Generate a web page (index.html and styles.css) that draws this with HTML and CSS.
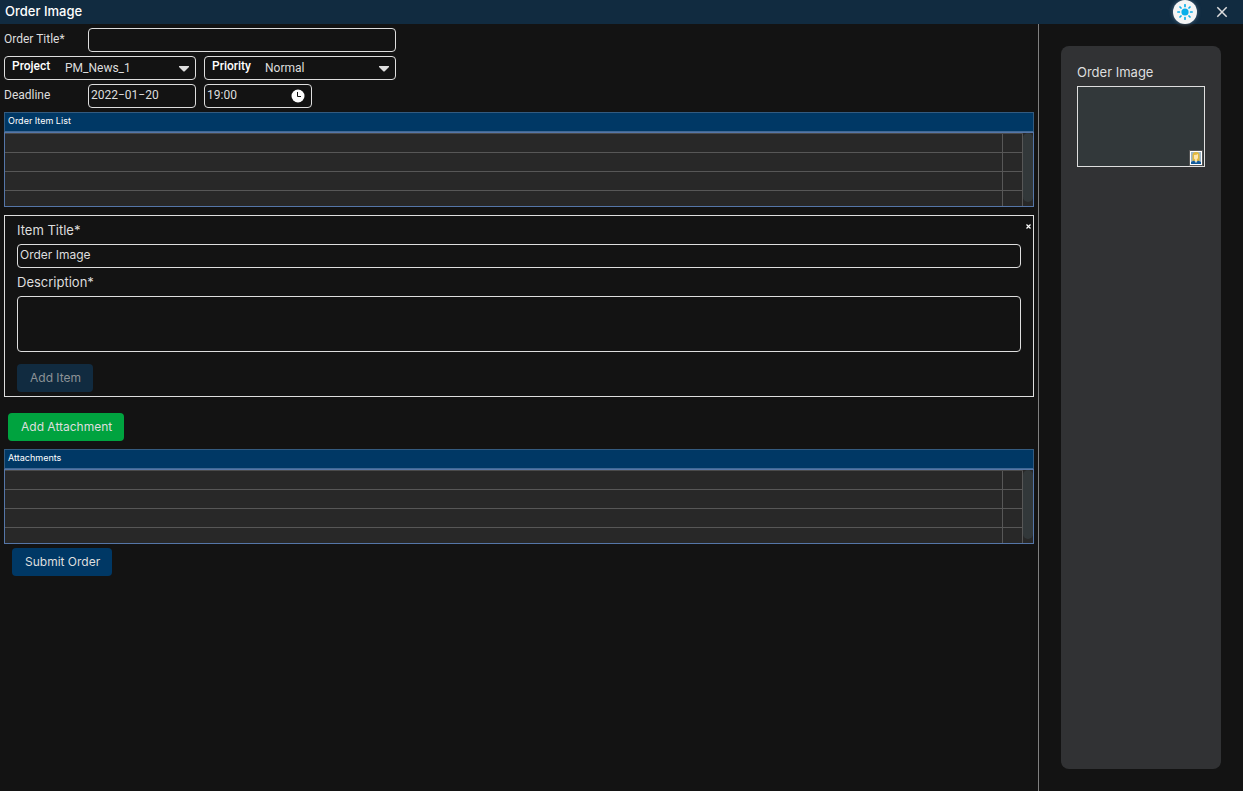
FILE: index.html
```html
<!DOCTYPE html>
<html lang="en">
<head>
<meta charset="utf-8">
<title>Order Image</title>
<link rel="stylesheet" href="styles.css">
</head>
<body>
<header class="topbar">
  <h1 class="topbar-title">Order Image</h1>
  <button class="theme-btn" type="button" aria-label="Switch theme">
    <svg width="16" height="16" viewBox="0 0 16 16"><circle cx="8" cy="8" r="3.6" fill="#08aeea"/><path d="M8 .8v1.600M8 13.600v1.600M.8 8h1.600M13.600 8h1.600M3 3l1 1M12 12l1 1M3 13l1-1M12 4l1-1" stroke="#08aeea" stroke-width="1.7" stroke-linecap="round"/></svg>
  </button>
  <button class="close-btn" type="button" aria-label="Close">
    <svg width="12" height="12" viewBox="0 0 12 12"><path d="M1.3 1.3l9.4 9.4M10.7 1.3l-9.4 9.4" stroke="#dedede" stroke-width="1.5"/></svg>
  </button>
</header>
<div class="layout">
  <main class="main">
    <form class="form">
      <div class="row">
        <label class="row-label" for="title">Order Title*</label>
        <input class="field field-title" id="title" type="text">
      </div>
      <div class="row">
        <div class="select-box">
          <label class="select-label" for="project">Project</label>
          <select class="select" id="project"><option>PM_News_1</option></select>
          <svg class="arrow" width="10" height="6" viewBox="0 0 10 6"><path d="M0 0h10v1L5.500 5.500h-1L0 1z" fill="#dedede"/></svg>
        </div>
        <div class="select-box">
          <label class="select-label" for="priority">Priority</label>
          <select class="select" id="priority"><option>Normal</option></select>
          <svg class="arrow" width="10" height="6" viewBox="0 0 10 6"><path d="M0 0h10v1L5.500 5.500h-1L0 1z" fill="#dedede"/></svg>
        </div>
      </div>
      <div class="row">
        <label class="row-label" for="date">Deadline</label>
        <input class="field field-date" id="date" type="text" value="2022−01−20">
        <div class="field time-box">
          <input class="time-input" type="text" value="19:00" aria-label="Deadline time">
          <svg width="14" height="14" viewBox="0 0 14 14"><circle cx="7" cy="7" r="6.5" fill="#fff"/><path d="M6.5 3v4.5H10" fill="none" stroke="#111" stroke-width="1"/></svg>
        </div>
      </div>

      <section class="grid">
        <h2 class="grid-title">Order Item List</h2>
        <div class="grid-body">
          <table class="grid-table">
            <tr><td></td><td class="grid-action"></td></tr>
            <tr><td></td><td class="grid-action"></td></tr>
            <tr><td></td><td class="grid-action"></td></tr>
            <tr><td></td><td class="grid-action"></td></tr>
          </table>
          <div class="scroll-thumb"></div>
        </div>
      </section>

      <section class="item">
        <button class="item-close" type="button" aria-label="Remove item"><svg width="5" height="5" viewBox="0 0 5 5"><path d="M.5 .5l4 4M4.500 .5l-4 4" stroke="#fff" stroke-width="1.200"/></svg></button>
        <label class="item-label" for="item-title">Item Title*</label>
        <input class="field item-input" id="item-title" type="text" value="Order Image">
        <label class="item-label" for="desc">Description*</label>
        <textarea class="field item-text" id="desc"></textarea>
        <button class="btn btn-disabled" type="button" disabled>Add Item</button>
      </section>

      <button class="btn btn-attach" type="button">Add Attachment</button>

      <section class="grid">
        <h2 class="grid-title">Attachments</h2>
        <div class="grid-body">
          <table class="grid-table">
            <tr><td></td><td class="grid-action"></td></tr>
            <tr><td></td><td class="grid-action"></td></tr>
            <tr><td></td><td class="grid-action"></td></tr>
            <tr><td></td><td class="grid-action"></td></tr>
          </table>
          <div class="scroll-thumb"></div>
        </div>
      </section>

      <button class="btn btn-submit" type="submit">Submit Order</button>
    </form>
  </main>
  <aside class="side">
    <div class="panel">
      <h2 class="panel-title">Order Image</h2>
      <div class="thumb">
        <svg width="14" height="16" viewBox="0 0 14 16"><path d="M0 0h14v16H0z" fill="#555"/><path d="M1 1h12v14H1z" fill="#fff"/><path d="M2 2h10v12H2z" fill="#9db6c8"/><path d="M3.500 11V5.500Q3.500 2 7 2t3.500 3.500V11z" fill="#e3b93c"/><path d="M5 5q3 0 4-1v4L7.500 10h-1L5 8.500z" fill="#ffe6ae"/><path d="M2 14v-2l3-1.500L7 13l2-2.500 3 1.500v2z" fill="#125b9c"/><path d="M6 10h2l-1 3z" fill="#fff0c8"/></svg>
      </div>
    </div>
  </aside>
</div>
</body>
</html>
```
FILE: styles.css
```css
* { box-sizing: border-box; }

body {
  margin: 0;
  min-height: 100vh;
  display: flex;
  flex-direction: column;
  background: #131313;
  color: #dedede;
  font: 12px/16px Inter, "Liberation Sans", sans-serif;
}

h1, h2 { margin: 0; font-weight: 400; }

button, input, select, textarea { font: inherit; color: inherit; }

button { border: 0; padding: 0; background: none; }

svg { display: block; flex: none; }

.topbar {
  display: flex;
  align-items: center;
  height: 24px;
  padding: 0 15px 0 5px;
  background: #112b40;
}

.topbar-title {
  flex: 1;
  padding-bottom: 2px;
  color: #fff;
  font-size: 13px;
  font-weight: 500;
}

.theme-btn {
  display: grid;
  place-items: center;
  width: 24px;
  height: 24px;
  margin-right: 19px;
  border-radius: 50%;
  background: #f5f5f5;
  box-shadow: 0 0 4px #4f6c84;
}

.layout { flex: 1; display: flex; }

.main {
  flex: 1;
  padding: 4px;
  border-right: 1px solid #808080;
}

.form { display: flex; flex-direction: column; }

.row {
  display: flex;
  margin-bottom: 4px;
  font-family: Roboto, "Liberation Sans", sans-serif;
}

.row-label { width: 84px; padding-top: 3px; }

.field {
  height: 24px;
  border: 1px solid #dedede;
  border-radius: 4px;
  background: #131313;
  padding: 0 2px 3px;
}

.field-title { width: 308px; }

.field-date { width: 108px; margin-right: 8px; }

.time-box {
  display: flex;
  align-items: center;
  width: 108px;
  padding: 0 6px 2px 2px;
}

.time-input {
  flex: 1;
  min-width: 0;
  padding: 0;
  border: 0;
  background: none;
}

.time-box svg { margin-top: 2px; }

.select-box {
  display: flex;
  align-items: center;
  width: 192px;
  height: 24px;
  margin-right: 8px;
  padding: 0 6px 0 7px;
  border: 1px solid #dedede;
  border-radius: 4px;
}

.select-label {
  width: 53px;
  padding-bottom: 4px;
  color: #fff;
  font-weight: 500;
}

.select {
  flex: 1;
  padding: 0;
  border: 0;
  appearance: none;
  background: #131313;
}

.arrow { pointer-events: none; margin-top: 2px; }

.grid-title {
  height: 20px;
  padding: 0 3px;
  border: 1px solid #335b80;
  border-bottom-color: #416994;
  background: #003865;
  color: #fff;
  font-size: 9px;
}

.grid-body {
  display: flex;
  height: 75px;
  overflow: hidden;
  border: 1px solid #5576a8;
  background: #282828;
}

.grid-table {
  flex: 1;
  border-spacing: 0;
  border-top: 1px solid #4a4a4a;
}

.grid-table td {
  height: 19px;
  padding: 0;
  border-bottom: 1px solid #575757;
}

.grid-table .grid-action {
  width: 21px;
  border-left: 1px solid #575757;
  border-right: 1px solid #575757;
}

.scroll-thumb {
  width: 10px;
  height: 69px;
  border-radius: 5px;
  background: #32383a;
}

.item {
  position: relative;
  display: flex;
  flex-direction: column;
  margin-top: 8px;
  padding: 4px 12px;
  border: 1px solid #dedede;
}

.item-label {
  margin: 2px 0 6px;
  font-size: 13px;
}

.item-input { margin-bottom: 4px; }

.item-text { height: 56px; resize: none; }

.item-close { position: absolute; top: 8px; right: 2px; }

.btn {
  align-self: flex-start;
  height: 28px;
  padding: 0 12px 0 13px;
  border-radius: 4px;
}

.btn-disabled {
  margin-top: 12px;
  background: #112b40;
  color: #8c9296;
}

.btn-attach { margin: 16px 4px 8px; background: #00a33f; }

.btn-submit { margin: 4px 8px; background: #003865; }

.side { display: flex; width: 204px; padding: 22px; }

.panel {
  flex: 1;
  padding: 18px 16px;
  border-radius: 8px;
  background: #313234;
}

.panel-title { margin-bottom: 6px; font-size: 13px; }

.thumb {
  display: flex;
  align-items: flex-end;
  justify-content: flex-end;
  height: 81px;
  padding-right: 1px;
  border: 1px solid #dedede;
  background: #32383a;
}
```
